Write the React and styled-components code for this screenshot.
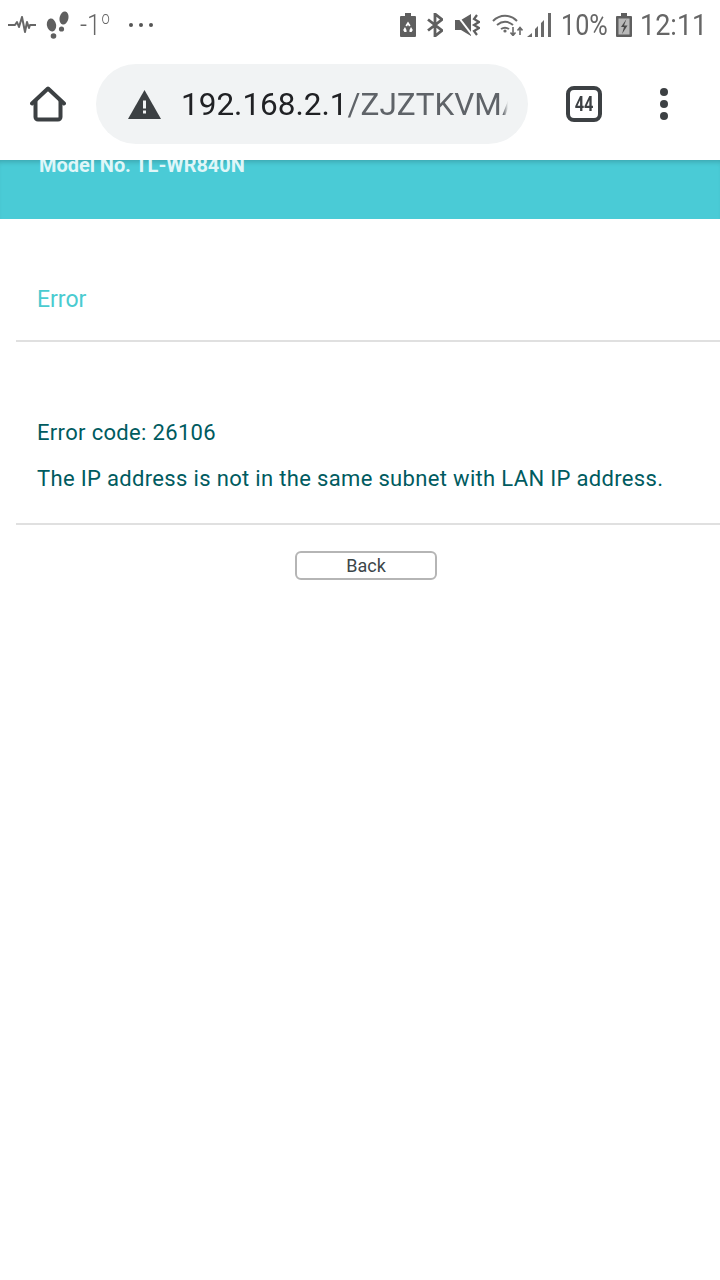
import React from 'react';
import styled, { createGlobalStyle } from 'styled-components';

const GlobalStyle = createGlobalStyle`
  html, body {
    margin: 0;
    background: #fff;
    font-family: Roboto, "Liberation Sans", sans-serif;
  }
`;

function App() {
  return (
    <Page>
      <GlobalStyle />
      <StatusBar>
        <StatusGroup>
          <svg width="28" height="18" viewBox="0 0 28 18" fill="none" stroke="#666" strokeWidth="2" strokeLinejoin="round">
            <path d="M0 9h7l2-3 2 5 3-10 3 15 2-10 2 6 1-3h6" />
          </svg>
          <Steps width="24" height="28" viewBox="0 0 24 28" fill="#5f5f5f">
            <ellipse cx="5.500" cy="14" rx="4.600" ry="6.500" transform="rotate(-10 5.500 14)" />
            <circle cx="7.500" cy="25" r="2.800" />
            <ellipse cx="18" cy="7" rx="4.400" ry="6.600" transform="rotate(12 18 7)" />
            <circle cx="15.500" cy="18" r="2.600" />
          </Steps>
          <Temperature>-1<sup>o</sup></Temperature>
          <Dots>
            <i /><i /><i />
          </Dots>
        </StatusGroup>
        <StatusGroup>
          <svg width="16" height="24" viewBox="0 0 16 24" fill="#5f5f5f">
            <path d="M5 0h6v3h4a1 1 0 0 1 1 1v19a1 1 0 0 1-1 1H1a1 1 0 0 1-1-1V4a1 1 0 0 1 1-1h4z" />
            <path d="M8 8.500l2.600 4-1.600.9-1-1.600-1 1.600-1.600-.9zM11 14l1.800 3-1.200 2H9.500v-2zM5 14l1.500 3v2H4.400l-1.200-2z" fill="#fff" />
          </svg>
          <Bluetooth width="16" height="24" viewBox="0 0 16 24" fill="none" stroke="#5f5f5f" strokeWidth="2.800">
            <path d="M1 6.500L15 17.500 8 23V1l7 5.500L1 17.500" />
          </Bluetooth>
          <Muted width="25" height="22" viewBox="0 0 25 22">
            <path d="M0 6h6l10-6v22l-10-6H0z" fill="#5f5f5f" />
            <path d="M1 0l17 22" stroke="#fff" strokeWidth="2" />
            <path d="M22 1l-3 4 5 3-5 3 5 3-5 3 3 4" stroke="#5f5f5f" strokeWidth="2.200" fill="none" />
          </Muted>
          <WifiIcon width="31" height="22" viewBox="0 0 31 22" fill="none" stroke="#6a6a6a" strokeWidth="2">
            <path d="M1 7c7-7 17-7 24 0M5 11c5-4 11-4 16 0M9 15c3-2 5-2 8 0" />
            <circle cx="13" cy="17" r="1.600" fill="#6a6a6a" stroke="none" />
            <path d="M21 13v8M18.500 18.500l2.500 3 2.500-3M28 21v-7M25.500 16.500l2.500-3 2.500 3" strokeWidth="1.600" />
          </WifiIcon>
          <SignalIcon width="24" height="24" viewBox="0 0 24 24" fill="#6a6a6a">
            <path d="M0 24l5-4v4zM8 24v-8l3-3v11zM14 24V10l3-3v17zM21 24V0h3v24z" />
          </SignalIcon>
          <Percent>10%</Percent>
          <BatteryIcon width="16" height="24" viewBox="0 0 16 24">
            <path d="M5 0h6v3h4a1 1 0 0 1 1 1v19a1 1 0 0 1-1 1H1a1 1 0 0 1-1-1V4a1 1 0 0 1 1-1h4z" fill="#5f5f5f" />
            <rect x="2.500" y="5.500" width="11" height="16" fill="#b9b9b9" />
            <path d="M10.500 6L5 14h3l-2 7 5.500-8.500H8z" fill="#4a4a4a" />
          </BatteryIcon>
          <Clock>12:11</Clock>
        </StatusGroup>
      </StatusBar>

      <Toolbar>
        <HomeIcon width="36" height="36" viewBox="0 0 36 36" fill="none" stroke="#3c4043" strokeWidth="4" strokeLinejoin="round" strokeLinecap="round">
          <path d="M2 17.500L18 2.500 34 17.500" />
          <path d="M5.500 15v16a2.500 2.500 0 0 0 2.500 2.500h20a2.500 2.500 0 0 0 2.500-2.500V15" />
        </HomeIcon>
        <Omnibox>
          <svg width="33" height="29" viewBox="0 0 33 29">
            <path d="M16.500 0l16.500 29H0z" fill="#3c4043" />
            <rect x="15" y="10.500" width="3" height="8" fill="#f1f3f4" />
            <rect x="15" y="20.500" width="3" height="3" fill="#f1f3f4" />
          </svg>
          <Url>192.168.2.1<UrlPath>/ZJZTKVMAX</UrlPath></Url>
        </Omnibox>
        <TabCount><TabDigits>44</TabDigits></TabCount>
        <Kebab><i /><i /><i /></Kebab>
      </Toolbar>

      <Banner>
        <Model>Model No. TL-WR840N</Model>
      </Banner>

      <Heading>
        <HeadingText>Error</HeadingText>
      </Heading>
      <Message>
        <MessageLine>Error code: 26106</MessageLine>
        <MessageLine>The IP address is not in the same subnet with LAN IP address.</MessageLine>
      </Message>
      <Actions>
        <BackButton>Back</BackButton>
      </Actions>
    </Page>
  );
}

const Page = styled.div`
  width: 720px;
  min-height: 1280px;
  background: #fff;
  overflow: hidden;
`;

const StatusBar = styled.div`
  height: 50px;
  padding: 0 15px 0 8px;
  box-sizing: border-box;
  display: flex;
  align-items: center;
  justify-content: space-between;
  color: #666;
`;

const StatusGroup = styled.div`
  display: flex;
  align-items: center;
`;

const Steps = styled.svg`
  margin-left: 10px;
`;

const Temperature = styled.span`
  width: 30px;
  margin-left: 10px;
  font-size: 30px;
  font-weight: 300;
  line-height: 30px;
  white-space: nowrap;
  transform: scaleX(0.82);
  transform-origin: left center;
  sup {
    font-size: 18px;
    line-height: 0;
    vertical-align: 11px;
    margin-left: 1px;
  }
`;

const Dots = styled.span`
  display: flex;
  gap: 6px;
  margin-left: 19px;
  i {
    width: 4px;
    height: 4px;
    border-radius: 50%;
    background: #555;
  }
`;

const Bluetooth = styled.svg`
  margin-left: 11px;
`;

const Muted = styled.svg`
  margin-left: 12px;
`;

const WifiIcon = styled.svg`
  margin-left: 12px;
`;

const SignalIcon = styled.svg`
  margin-left: 4px;
`;

const Percent = styled.span`
  width: 45px;
  margin-left: 10px;
  font-size: 30px;
  line-height: 32px;
  white-space: nowrap;
  transform: scaleX(0.84);
  transform-origin: left center;
`;

const BatteryIcon = styled.svg`
  margin-left: 10px;
`;

const Clock = styled.span`
  width: 65px;
  margin-left: 8px;
  font-size: 30px;
  line-height: 32px;
  white-space: nowrap;
  transform: scaleX(0.9);
  transform-origin: left center;
`;

const Toolbar = styled.div`
  height: 110px;
  padding: 4px 0 0 30px;
  box-sizing: border-box;
  display: flex;
  align-items: flex-start;
  position: relative;
  z-index: 1;
  background: #fff;
`;

const HomeIcon = styled.svg`
  margin-top: 32px;
  flex: none;
`;

const Omnibox = styled.div`
  width: 432px;
  height: 80px;
  margin: 10px 0 0 30px;
  padding: 0 20px 0 32px;
  box-sizing: border-box;
  flex: none;
  display: flex;
  align-items: center;
  gap: 20px;
  border-radius: 40px;
  background: #f1f3f4;
`;

const Url = styled.div`
  font-size: 31.5px;
  color: #202124;
  white-space: nowrap;
  overflow: hidden;
  flex: 1;
  min-width: 0;
  mask-image: linear-gradient(to right, #000 calc(100% - 5px), transparent);
`;

const UrlPath = styled.span`
  color: #5f6368;
`;

const TabCount = styled.div`
  width: 36px;
  height: 36px;
  margin: 32px 0 0 38px;
  box-sizing: border-box;
  flex: none;
  border: 4px solid #3c4043;
  border-radius: 8px;
  display: flex;
  align-items: center;
  justify-content: center;
`;

const TabDigits = styled.span`
  font-size: 21px;
  font-weight: 700;
  color: #3c4043;
  transform: scaleX(0.78);
`;

const Kebab = styled.div`
  margin: 34px 0 0 58px;
  display: flex;
  flex-direction: column;
  gap: 4px;
  i {
    width: 8px;
    height: 8px;
    border-radius: 50%;
    background: #3c4043;
  }
`;

const Banner = styled.div`
  height: 59px;
  padding-left: 39px;
  background: #4acbd6;
  box-shadow: inset 0 5px 5px -3px rgba(0, 0, 0, 0.18);
  overflow: hidden;
`;

const Model = styled.div`
  font-size: 20px;
  font-weight: 700;
  line-height: 11px;
  letter-spacing: -0.05px;
  color: #dff6f8;
`;

const Heading = styled.div`
  height: 123px;
  margin-left: 16px;
  padding-left: 21px;
  display: flex;
  align-items: center;
  padding-top: 39px;
  box-sizing: border-box;
  border-bottom: 2px solid #e0e0e0;
`;

const HeadingText = styled.h1`
  margin: 0;
  font-size: 23px;
  font-weight: 400;
  color: #4acbd0;
`;

const Message = styled.div`
  margin-left: 16px;
  padding: 78px 0 31px 21px;
  border-bottom: 2px solid #e0e0e0;
  display: flex;
  flex-direction: column;
  gap: 20px;
`;

const MessageLine = styled.p`
  margin: 0;
  font-size: 22px;
  line-height: 26px;
  letter-spacing: 0.33px;
  color: #005b5f;
`;

const Actions = styled.div`
  margin-left: 12px;
  padding-top: 26px;
  display: flex;
  justify-content: center;
`;

const BackButton = styled.button`
  width: 142px;
  height: 29px;
  padding: 0;
  background: #fff;
  border: 2px solid #b5b5b5;
  border-radius: 6px;
  font-family: inherit;
  font-size: 18px;
  color: #3c4649;
`;

export default App;
